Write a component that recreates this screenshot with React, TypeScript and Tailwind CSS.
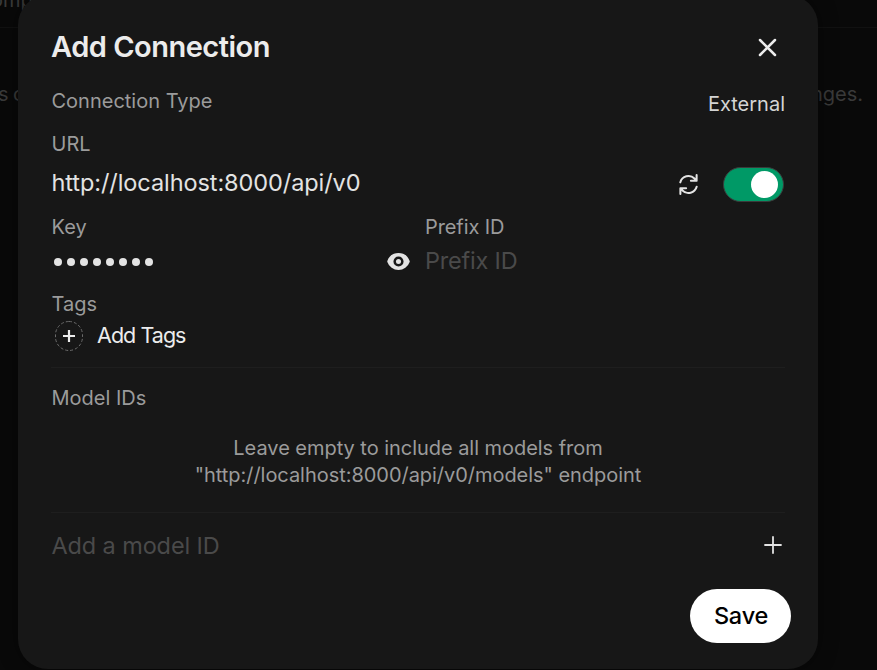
import React from "react";

function RefreshIcon() {
  return (
    <svg className="h-[27px] w-[27px]" viewBox="0 0 20 20" fill="currentColor">
      <path
        fillRule="evenodd"
        clipRule="evenodd"
        d="M15.312 11.424a5.5 5.5 0 01-9.201 2.466l-.312-.311h2.433a.75.75 0 000-1.5H3.989a.75.75 0 00-.75.75v4.242a.75.75 0 001.5 0v-2.43l.31.31a7 7 0 0011.712-3.138.75.75 0 00-1.449-.39zm1.23-3.723a.75.75 0 00.219-.53V2.929a.75.75 0 00-1.5 0V5.36l-.31-.31A7 7 0 003.239 8.188a.75.75 0 101.448.389A5.5 5.5 0 0113.89 6.11l.311.31h-2.432a.75.75 0 000 1.5h4.243a.75.75 0 00.53-.219z"
      />
    </svg>
  );
}

function EyeIcon() {
  return (
    <svg className="h-[27px] w-[27px]" viewBox="0 0 16 16" fill="currentColor">
      <path d="M8 9.5a1.5 1.5 0 1 0 0-3 1.5 1.5 0 0 0 0 3Z" />
      <path
        fillRule="evenodd"
        clipRule="evenodd"
        d="M1.38 8.28a.87.87 0 0 1 0-.566 7.003 7.003 0 0 1 13.238.006.87.87 0 0 1 0 .566A7.003 7.003 0 0 1 1.379 8.28ZM11 8a3 3 0 1 1-6 0 3 3 0 0 1 6 0Z"
      />
    </svg>
  );
}

export default function App() {
  return (
    <div className="relative h-[670px] w-[877px] overflow-hidden bg-[#090909] font-['Inter',sans-serif] text-[20px] text-[#3a3a3a]">
      <div className="flex h-[28px] items-start border-b border-[#111111]">
        <span className="-ml-[9px] -mt-[13px] leading-[27px]">omp</span>
      </div>
      <div className="flex h-[132px] items-center justify-between pr-[14px]">
        <span className="-ml-[2px] leading-[27px] tracking-[-0.6px]">s c</span>
        <span className="leading-[27px]">changes.</span>
      </div>

      <div className="absolute -top-[5px] left-[18px] flex h-[674px] w-[800px] flex-col rounded-[30px] bg-[#171717] pl-[33px] pr-[33px] shadow-[0_0_20px_rgba(0,0,0,0.4)]">
        <div className="mt-[29px] flex h-[46px] shrink-0 items-center justify-between pr-[5px]">
          <h1 className="text-[29px] font-semibold tracking-[-0.5px] text-[#ececec]">Add Connection</h1>
          <svg className="mt-px h-[24px] w-[24px] text-[#ececec]" viewBox="0 0 24 24" fill="none" stroke="currentColor" strokeWidth="2.5" strokeLinecap="round">
            <path d="M4 4l15 15M19 4l-15 15" />
          </svg>
        </div>
        <div className="mt-[17px] flex h-[28px] shrink-0 items-start justify-between leading-[28px]">
          <span className="pl-[0.5px] text-[#9b9b9b]">Connection Type</span>
          <span className="mt-[3px] text-[#d4d4d4]">External</span>
        </div>
        <div className="mt-[15px] h-[28px] shrink-0 pl-[0.5px] leading-[28px] text-[#9b9b9b]">URL</div>
        <div className="mt-[5px] flex h-[42px] shrink-0 items-center">
          <span className="flex-1 pb-[2px] pl-[0.5px] text-[23.5px] tracking-[-0.08px] text-[#e3e3e3]">http://localhost:8000/api/v0</span>
          <span className="mr-[20.5px] text-[#e3e3e3]"><RefreshIcon /></span>
          <span className="mr-[1.5px] mt-px flex h-[35px] w-[61px] items-center justify-end rounded-full border border-[#3b3b3b] bg-[#009966] pr-[4.5px]">
            <span className="h-[27px] w-[27px] rounded-full bg-white" />
          </span>
        </div>
        <div className="mt-[8px] flex h-[28px] shrink-0 pl-[0.5px] leading-[28px] text-[#9b9b9b]">
          <span className="w-[373.5px]">Key</span>
          <span className="tracking-[-0.1px]">Prefix ID</span>
        </div>
        <div className="mt-[4px] flex h-[32px] shrink-0 items-center text-[23.5px]">
          <span className="flex w-[334px] items-center gap-[5.15px] pl-[2.5px] pt-[2px]">
            {Array.from({ length: 8 }, (_, i) => (
              <span key={i} className="h-[8px] w-[8px] shrink-0 rounded-full bg-[#e3e3e3]" />
            ))}
          </span>
          <span className="mr-[13px] text-[#e3e3e3]"><EyeIcon /></span>
          <span className="tracking-[-0.2px] text-[#4a4a4a]">Prefix ID</span>
        </div>
        <div className="mt-[13px] h-[28px] shrink-0 pl-[0.5px] leading-[28px] text-[#9b9b9b]">Tags</div>
        <div className="mt-[3px] flex h-[30px] shrink-0 items-center">
          <svg className="ml-[3px] h-[32px] w-[30px] text-[#ececec]" viewBox="0 0 30 32" fill="none" stroke="currentColor">
            <rect x="1.5" y="1.5" width="27" height="29" rx="13.5" stroke="#6c6c6c" strokeDasharray="3 2" />
            <path d="M15 10v12M9 16h12" strokeWidth="2.2" />
          </svg>
          <span className="-mt-[2px] ml-[13px] text-[21.5px] tracking-[-0.95px] text-[#ececec]">Add Tags</span>
        </div>
        <div className="mt-[16px] h-px shrink-0 bg-[#1e1e1e]" />
        <div className="mt-[16px] h-[28px] shrink-0 pl-[0.5px] leading-[28px] text-[#9b9b9b]">Model IDs</div>
        <div className="mt-[23px] shrink-0 text-center leading-[27px] tracking-[-0.04px] text-[#9b9b9b]">
          <div>Leave empty to include all models from</div>
          <div>"http://localhost:8000/api/v0/models" endpoint</div>
        </div>
        <div className="mt-[23px] h-px shrink-0 bg-[#1e1e1e]" />
        <div className="mt-[17px] flex h-[32px] shrink-0 items-center justify-between">
          <span className="pl-[0.5px] text-[23.5px] tracking-[-0.12px] text-[#4a4a4a]">Add a model ID</span>
          <svg className="-mt-[2px] mr-[2.5px] h-[20px] w-[20px] text-[#e3e3e3]" viewBox="0 0 20 20" fill="none" stroke="currentColor" strokeWidth="1.8" strokeLinecap="round">
            <path d="M10 2v16M2 10h16" />
          </svg>
        </div>
        <button className="-mr-[6px] mt-[27px] h-[54px] w-[101px] shrink-0 self-end rounded-full bg-white pl-px text-[23.5px] font-medium tracking-[-0.2px] text-black">Save</button>
      </div>
    </div>
  );
}
